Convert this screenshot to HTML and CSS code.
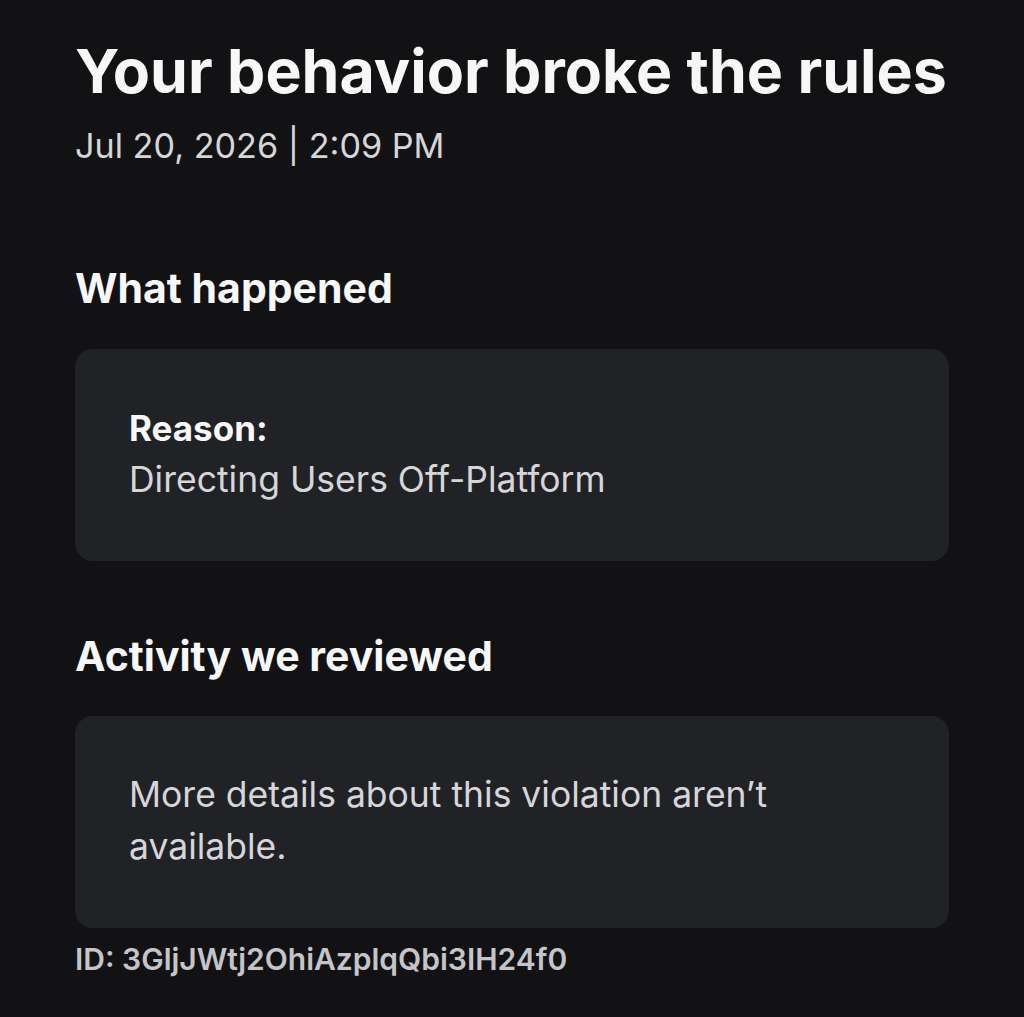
FILE: index.html
```html
<!DOCTYPE html>
<html lang="en">
<head>
    <meta charset="UTF-8">
    <meta name="viewport" content="width=device-width, initial-scale=1.0">
    <title>Violation details</title>
    <link rel="stylesheet" href="styles.css">
</head>
<body>
    <div class="page">
        <h1 class="title">Your behavior broke the rules</h1>
        <div class="date">Jul 20, 2026 | 2:09 PM</div>

        <h2 class="section-title">What happened</h2>
        <div class="card">
            <div class="card-label">Reason:</div>
            <div class="card-text">Directing Users Off-Platform</div>
        </div>

        <h2 class="section-title section-gap">Activity we reviewed</h2>
        <div class="card">
            <div class="card-text">More details about this violation aren’t available.</div>
        </div>

        <div class="ref-id">ID: 3GljJWtj2OhiAzplqQbi3IH24f0</div>
    </div>
</body>
</html>
```

FILE: styles.css
```css
body {
    margin: 0;
    background-color: #121214;
    color: #f7f7f8;
    font-family: Inter, "Liberation Sans", sans-serif;
}
.page {
    padding: 34px 75px 30px;
}
.title {
    margin: 0;
    font-size: 60.8px;
    line-height: 74px;
    font-weight: 700;
    white-space: nowrap;
}
.date {
    margin-top: 16px;
    font-size: 34.2px;
    line-height: 44px;
    color: #d6d6da;
}
.section-title {
    margin: 96px 0 0;
    font-size: 41px;
    line-height: 48px;
    font-weight: 700;
}
.section-gap {
    margin-top: 71px;
}
.card {
    margin-top: 37px;
    padding: 53px 54px 54px;
    border-radius: 18px;
    background-color: #212226;
}
.card + .section-gap + .card {
    margin-top: 36px;
}
.card-label {
    font-size: 35px;
    line-height: 52px;
    font-weight: 700;
}
.card-text {
    font-size: 35.5px;
    line-height: 52.5px;
    color: #d6d6da;
    max-width: 680px;
}
.ref-id {
    margin-top: 13px;
    font-size: 30px;
    line-height: 36px;
    font-weight: 600;
    color: #c4c4c9;
}
```
